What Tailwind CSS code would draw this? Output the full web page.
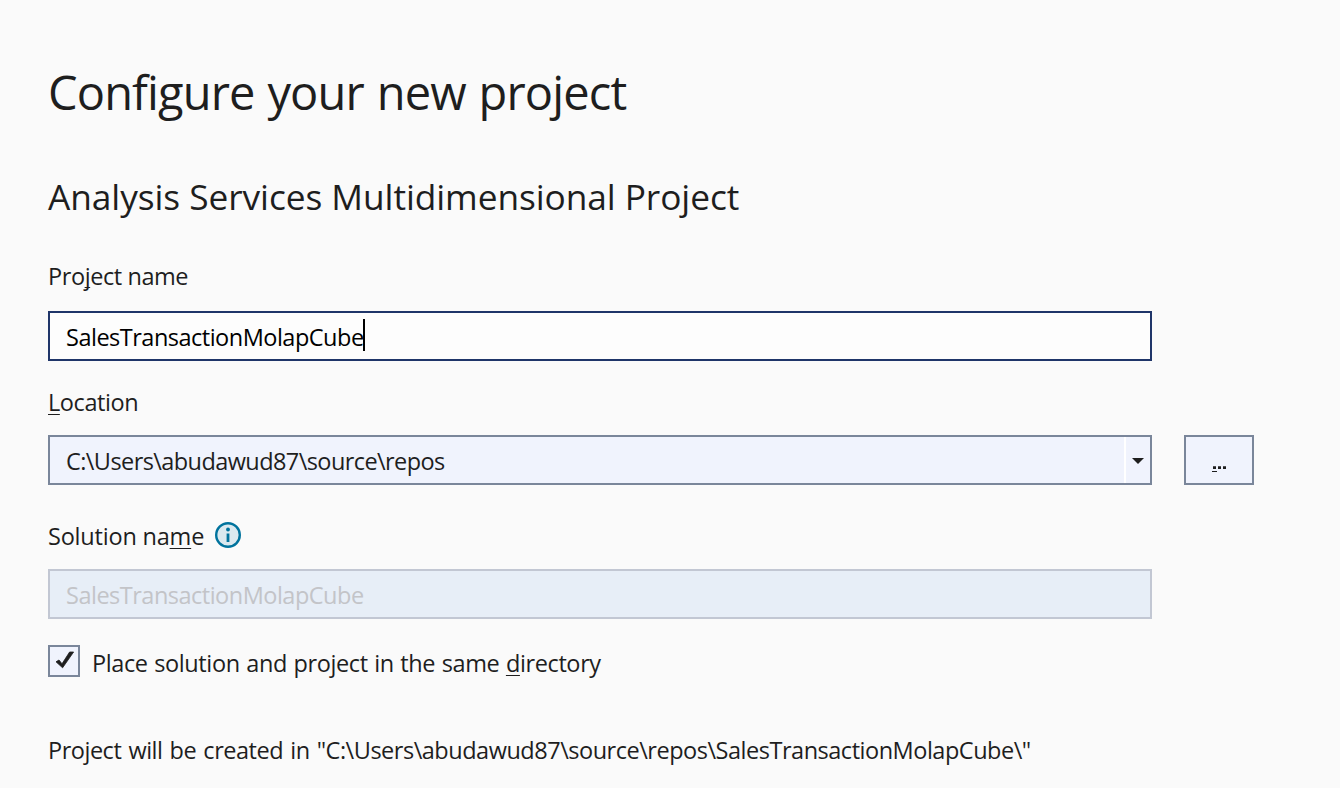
<!DOCTYPE html>
<html lang="en">
<head>
<meta charset="utf-8">
<title>Configure your new project</title>
<script src="https://cdn.jsdelivr.net/npm/@tailwindcss/browser@4"></script>
</head>
<body class="bg-[#fafafa]">
<main class="flex h-[788px] w-[1340px] flex-col overflow-hidden bg-[#fafafa] pl-12 font-['Open_Sans','Noto_Sans',sans-serif] text-[23.5px] leading-8 whitespace-nowrap text-[#1e1e1e]">
  <h1 class="mt-[60px] h-16 text-[47px] leading-[64px] tracking-[-0.86px] [word-spacing:1.5px]">Configure your new project</h1>
  <h2 class="mt-[48px] h-12 text-[35.3px] leading-[48px] tracking-[-0.08px]">Analysis Services Multidimensional Project</h2>

  <label class="mt-10 h-8 tracking-[-0.42px]">Pro<span class="underline decoration-1 underline-offset-2 [text-decoration-skip-ink:none]">j</span>ect name</label>
  <div class="mt-[19px] flex h-[50px] w-[1104px] items-center border-2 border-[#1f3569] bg-[#fdfdfd] pl-4 tracking-[-0.5px] text-black">
    <span class="pt-px">SalesTransactionMolapCube</span><i class="-mt-0.5 -ml-px h-8 w-0.5 bg-black"></i>
  </div>

  <label class="mt-[25px] h-8 tracking-[-0.43px]"><span class="underline decoration-1 underline-offset-[3px]">L</span>ocation</label>
  <div class="mt-[17px] flex gap-8">
    <div class="flex h-[50px] w-[1104px] items-center border-2 border-[#7a869a] bg-[#f0f3fd] pl-4 tracking-[-0.58px]">
      <span class="flex-1 pt-0.5">C:\Users\abudawud87\source\repos</span>
      <span class="flex h-full w-[26px] items-center justify-center border-l-2 border-white pt-0.5">
        <svg class="h-[6px] w-3" viewBox="0 0 12 6" fill="#1e1e1e"><path d="M0 0h12L6 6z"/></svg>
      </span>
    </div>
    <button class="flex h-[50px] w-[70px] items-end justify-center border-2 border-[#7a869a] bg-[#f0f3fd] pb-[10px]">
      <svg class="h-[7px] w-[15px]" viewBox="0 0 15 7" fill="#1e1e1e" aria-label="..."><path d="M1 .2h3v2.8H1zM6 .2h3v2.8H6zM11 .2h3v2.8h-3zM0 5h5v1H0z"/></svg>
    </button>
  </div>

  <div class="mt-[35px] flex h-8 gap-[11px]">
    <label class="tracking-[-0.2px]">Solution na<span class="underline decoration-1 underline-offset-[3px]">m</span>e</label>
    <svg class="mt-0.5 h-[26px] w-[26px]" viewBox="0 0 26 26"><circle cx="13" cy="13" r="11.8" fill="#dbe9ef" stroke="#00739d" stroke-width="2.4"/><circle cx="13" cy="7.5" r="1.9" fill="#00739d"/><path d="M11.6 11.5h2.8V20h-2.8z" fill="#00739d"/></svg>
  </div>
  <div class="mt-[17px] flex h-[50px] w-[1104px] items-center border-2 border-[#c2c7d3] bg-[#e7eef7] pt-px pl-4 tracking-[-0.5px] text-[#c3c4c8]">SalesTransactionMolapCube</div>

  <div class="mt-[26px] flex h-8 gap-3">
    <span class="flex h-8 w-8 items-center justify-center border-2 border-[#7a869a] bg-[#f0f3fd]">
      <svg class="h-7 w-7" viewBox="0 0 28 28"><path d="M6 14.8 9 13 12 16.8 19.6 5H23.6L12.6 20.8z" fill="#1e1e1e" stroke="#1e1e1e" stroke-width=".8"/></svg>
    </span>
    <label class="pt-0.5 tracking-[-0.38px] [word-spacing:0.8px]">Place solution and project in the same <span class="underline decoration-1 underline-offset-[3px]">d</span>irectory</label>
  </div>

  <p class="mt-[57px] h-8 tracking-[-0.48px] [word-spacing:1.5px]">Project will be created in "C:\Users\abudawud87\source\repos\SalesTransactionMolapCube\"</p>
</main>
</body>
</html>
